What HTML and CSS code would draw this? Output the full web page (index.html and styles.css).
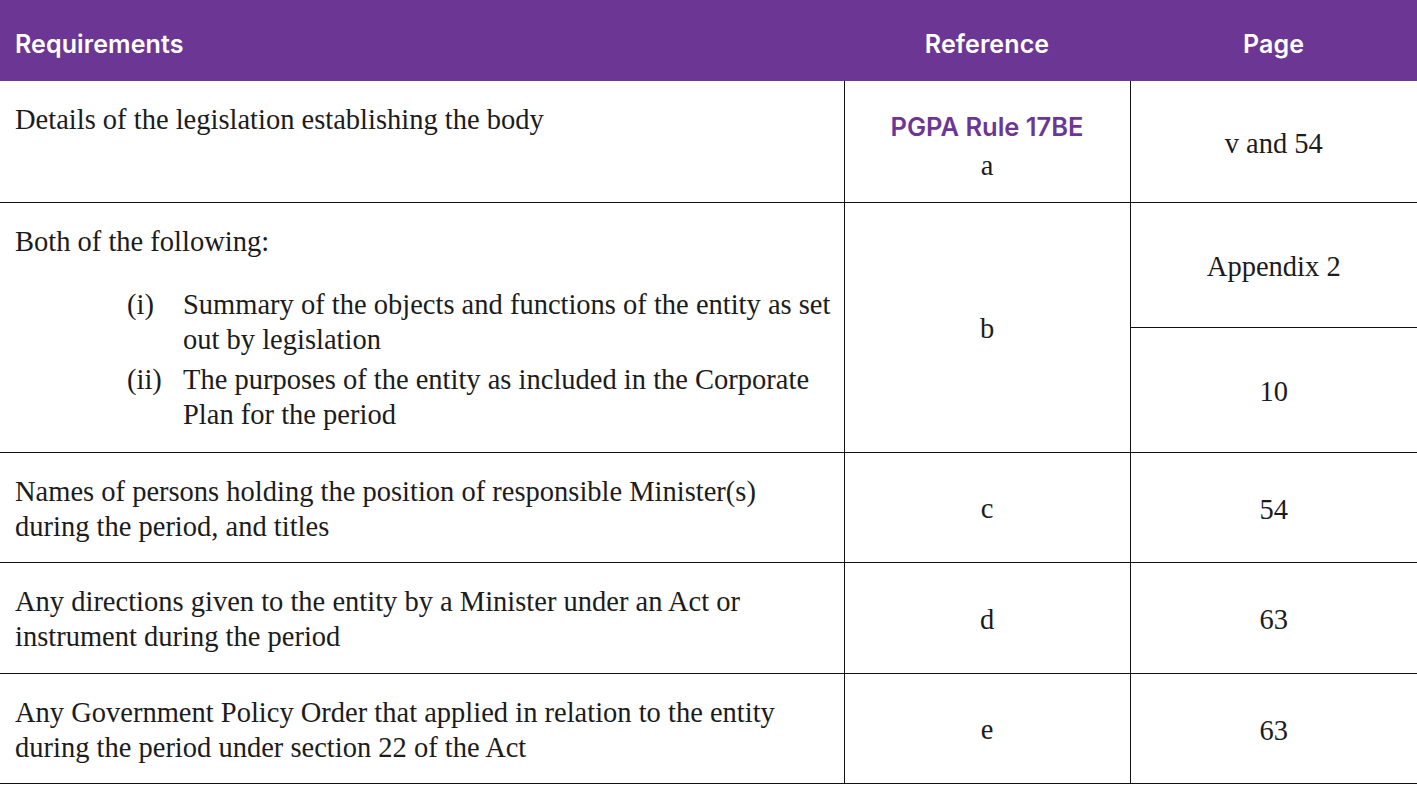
FILE: index.html
```html
<!DOCTYPE html>
<html lang="en">
<head>
<meta charset="utf-8">
<title>PGPA Requirements</title>
<link rel="stylesheet" href="styles.css">
</head>
<body>
<table class="req">
  <colgroup>
    <col class="c-req">
    <col class="c-ref">
    <col class="c-page">
  </colgroup>
  <thead>
    <tr>
      <th class="h-left">Requirements</th>
      <th>Reference</th>
      <th>Page</th>
    </tr>
  </thead>
  <tbody>
    <tr class="r1">
      <td class="req-text">Details of the legislation establishing the body</td>
      <td class="ref ref-first"><div class="rule">PGPA Rule 17BE</div><div class="letter">a</div></td>
      <td class="page">v and 54</td>
    </tr>
    <tr class="r2a">
      <td class="req-text" rowspan="2">
        <div class="intro">Both of the following:</div>
        <ol class="items">
          <li><span class="mark">(i)</span><span class="item-text">Summary of the objects and functions of the entity as set out by legislation</span></li>
          <li><span class="mark">(ii)</span><span class="item-text">The purposes of the entity as included in the Corporate Plan for the period</span></li>
        </ol>
      </td>
      <td class="ref" rowspan="2">b</td>
      <td class="page">Appendix 2</td>
    </tr>
    <tr class="r2b">
      <td class="page">10</td>
    </tr>
    <tr class="r3">
      <td class="req-text">Names of persons holding the position of responsible Minister(s) during the period, and titles</td>
      <td class="ref">c</td>
      <td class="page">54</td>
    </tr>
    <tr class="r4">
      <td class="req-text">Any directions given to the entity by a Minister under an Act or instrument during the period</td>
      <td class="ref">d</td>
      <td class="page">63</td>
    </tr>
    <tr class="r5">
      <td class="req-text">Any Government Policy Order that applied in relation to the entity during the period under section 22 of the Act</td>
      <td class="ref">e</td>
      <td class="page">63</td>
    </tr>
  </tbody>
</table>
</body>
</html>
```

FILE: styles.css
```css
html, body {
  margin: 0;
  padding: 0;
  background: #ffffff;
}

.req {
  width: 1417px;
  border-collapse: collapse;
  table-layout: fixed;
  font-family: "Liberation Serif", "Times New Roman", serif;
  font-size: 28.5px;
  line-height: 35px;
  color: #1c1c1c;
}

.c-req { width: 844px; }
.c-ref { width: 286px; }
.c-page { width: 287px; }

.req thead th {
  background: #6c3794;
  color: #ffffff;
  font-family: Inter, "Open Sans", sans-serif;
  font-weight: 600;
  font-size: 25px;
  height: 81px;
  padding: 8px 0 0 0;
  box-sizing: border-box;
  text-align: center;
  vertical-align: middle;
  letter-spacing: 0.1px;
}

.req thead th.h-left {
  text-align: left;
  padding-left: 15px;
}

.req td {
  border-bottom: 1px solid #111111;
  padding: 0;
  vertical-align: middle;
  text-align: center;
}

.req td.page {
  padding-top: 4px;
}

.req td.req-text {
  text-align: left;
  vertical-align: top;
  padding: 21px 10px 0 15px;
}

.req td.ref,
.req td.page {
  border-left: 1px solid #111111;
}

.req td.ref {
  padding-top: 3px;
}

.req td.ref-first {
  padding-top: 8px;
}

.r1 { height: 121px; }
.r2a { height: 125px; }
.r2b { height: 125px; }
.r3 { height: 110px; }
.r4 { height: 111px; }
.r5 { height: 110px; }

.req td.ref .rule {
  font-family: Inter, "Open Sans", sans-serif;
  font-weight: 600;
  font-size: 25.5px;
  line-height: 38px;
  color: #6c3794;
}

.req td.ref .letter {
  margin-top: 2px;
}

.intro {
  margin-bottom: 28px;
}

.items {
  list-style: none;
  margin: 0;
  padding: 0 0 0 112px;
}

.items li {
  display: flex;
  margin-bottom: 5px;
}

.items .mark {
  flex: 0 0 56px;
}

.items .item-text {
  flex: 1;
}
```
